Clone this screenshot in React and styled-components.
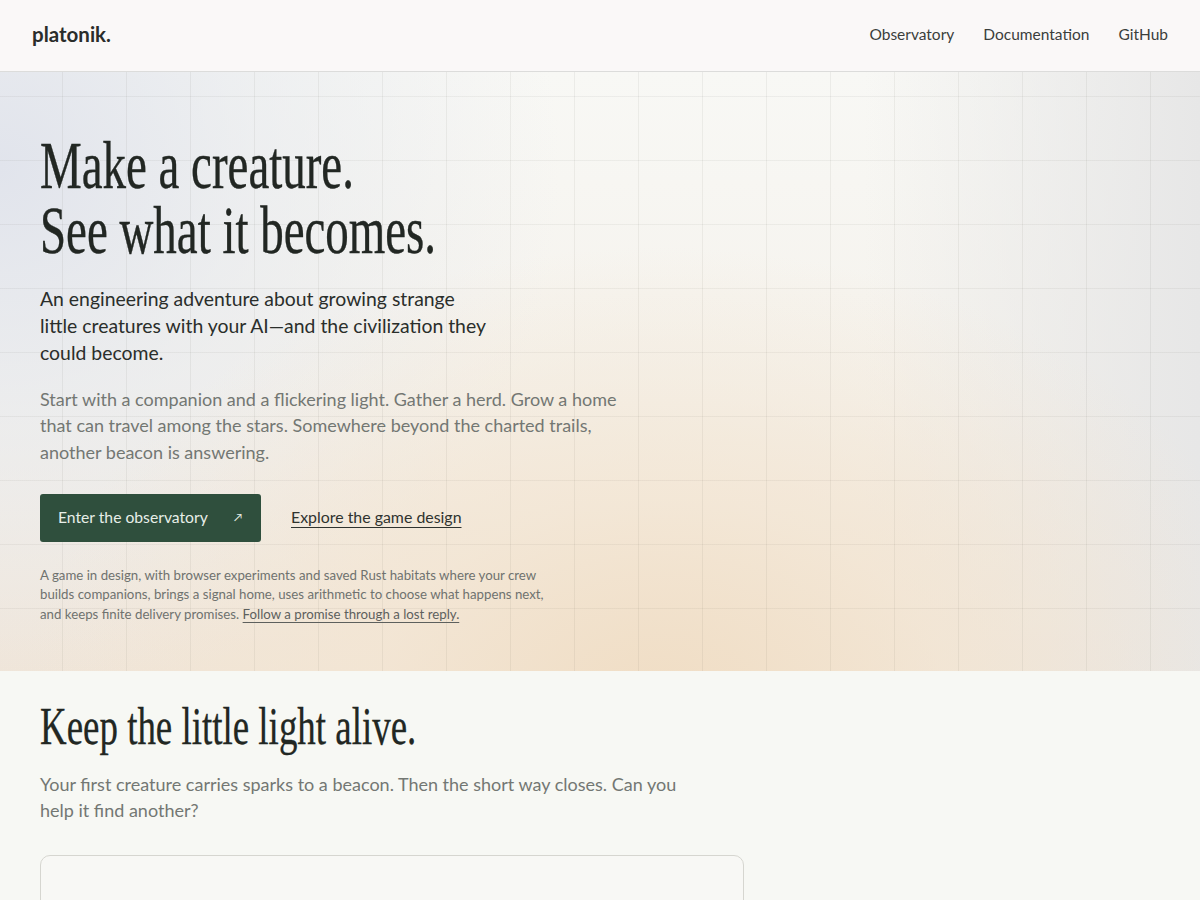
import React from "react";
import styled, { createGlobalStyle } from "styled-components";

const Global = createGlobalStyle`
  html, body { margin: 0; padding: 0; }
  body {
    background: #f7f7f3;
    font-family: "Lato", "Liberation Sans", sans-serif;
    color: #262a27;
    -webkit-font-smoothing: antialiased;
  }
  * { box-sizing: border-box; }
`;

const Header = styled.header`
  height: 72px;
  padding: 0 32px 3px;
  display: flex;
  align-items: center;
  justify-content: space-between;
  background: #faf8f8;
  border-bottom: 1px solid #dcdcdb;
  box-shadow: 0 1px 3px rgba(0, 0, 0, 0.04);
`;

const Logo = styled.a`
  font-size: 20.5px;
  font-weight: 700;
  color: #2a2d2b;
  text-decoration: none;
`;

const Nav = styled.nav`
  display: flex;
  gap: 29px;
`;

const NavLink = styled.a`
  font-size: 15.5px;
  color: #3b3e3c;
  text-decoration: none;
`;

const Hero = styled.section`
  padding: 61px 40px 47px;
  background-color: #f6f5f1;
  background-image:
    linear-gradient(to right, rgba(60, 60, 50, 0.065) 1px, transparent 1px),
    linear-gradient(to bottom, rgba(60, 60, 50, 0.06) 1px, transparent 1px),
    radial-gradient(ellipse 640px 460px at 55% 106%, rgba(240, 221, 196, 1) 0%, rgba(243, 229, 210, 0.75) 45%, rgba(246, 240, 230, 0) 100%),
    radial-gradient(ellipse 560px 540px at 0% 16%, rgba(225, 228, 236, 1) 0%, rgba(230, 233, 238, 0.6) 45%, rgba(240, 241, 240, 0) 100%),
    linear-gradient(to right, rgba(231, 230, 229, 0) 72%, rgba(231, 231, 231, 1) 100%),
    linear-gradient(to bottom, #f8f8f5 0%, #f5f2ec 55%, #f0e5d8 100%);
  background-size: 64px 64px, 64px 64px, auto, auto, auto, auto;
  background-position: 62px 24px, 62px 24px, 0 0, 0 0, 0 0, 0 0;
`;

const Display = styled.h1`
  margin: 0;
  font-family: "Liberation Serif", "Times New Roman", serif;
  font-weight: 400;
  font-size: 68px;
  line-height: 65px;
  color: #222723;
  transform: scaleX(0.69);
  transform-origin: left top;
  -webkit-text-stroke: 0.4px #222723;
  white-space: nowrap;
`;

const Lead = styled.p`
  margin: 22px 0 0;
  max-width: 456px;
  font-size: 19.4px;
  line-height: 27px;
  color: #2a2e2b;
`;

const Body = styled.p`
  margin: ${(p) => p.$mt || 20}px 0 0;
  max-width: ${(p) => p.$max || 590}px;
  font-size: 18px;
  line-height: 26.4px;
  color: #737773;
`;

const Actions = styled.div`
  margin-top: 29px;
  display: flex;
  align-items: center;
  gap: 30px;
`;

const PrimaryButton = styled.a`
  height: 48px;
  width: 221px;
  padding: 0 18px 3px;
  display: flex;
  align-items: center;
  justify-content: space-between;
  background: #2f4f3d;
  color: #e7eee8;
  border-radius: 3px;
  font-size: 15.7px;
  text-decoration: none;
`;

const Arrow = styled.span`
  font-size: 11px;
  margin-right: 1px;
`;

const TextLink = styled.a`
  font-size: 15.9px;
  margin-bottom: 3px;
  color: #2f332f;
  text-decoration: underline;
  text-underline-offset: 4px;
  text-decoration-thickness: 1px;
`;

const Fine = styled.p`
  margin: 24px 0 0;
  max-width: 520px;
  font-size: 13.25px;
  line-height: 19.2px;
  color: #6f726f;

  a {
    color: #5d605d;
    text-decoration: underline;
    text-underline-offset: 3px;
    text-decoration-thickness: 1px;
  }
`;

const Section = styled.section`
  padding: 27px 40px 0;
  background: #f7f8f4;
`;

const SectionTitle = styled.h2`
  margin: 0;
  font-family: "Liberation Serif", "Times New Roman", serif;
  font-weight: 400;
  font-size: 52px;
  line-height: 57px;
  color: #222723;
  transform: scaleX(0.71);
  transform-origin: left top;
  -webkit-text-stroke: 0.3px #222723;
  white-space: nowrap;
`;

const Card = styled.div`
  margin-top: 31px;
  width: 704px;
  height: 120px;
  border: 1px solid #d6d6d0;
  border-radius: 10px;
  background: #f8f8f5;
`;

export default function App() {
  return (
    <>
      <Global />
      <Header>
        <Logo href="#">platonik.</Logo>
        <Nav>
          <NavLink href="#">Observatory</NavLink>
          <NavLink href="#">Documentation</NavLink>
          <NavLink href="#">GitHub</NavLink>
        </Nav>
      </Header>
      <Hero>
        <Display>
          Make a creature.
          <br />
          See what it becomes.
        </Display>
        <Lead>
          An engineering adventure about growing strange little creatures with
          your AI—and the civilization they could become.
        </Lead>
        <Body>
          Start with a companion and a flickering light. Gather a herd. Grow a
          home that can travel among the stars. Somewhere beyond the charted
          trails, another beacon is answering.
        </Body>
        <Actions>
          <PrimaryButton href="#">
            Enter the observatory <Arrow>↗</Arrow>
          </PrimaryButton>
          <TextLink href="#">Explore the game design</TextLink>
        </Actions>
        <Fine>
          A game in design, with browser experiments and saved Rust habitats
          where your crew builds companions, brings a signal home, uses
          arithmetic to choose what happens next, and keeps finite delivery
          promises. <a href="#">Follow a promise through a lost reply.</a>
        </Fine>
      </Hero>
      <Section>
        <SectionTitle>Keep the little light alive.</SectionTitle>
        <Body $max={660} $mt={16}>
          Your first creature carries sparks to a beacon. Then the short way
          closes. Can you help it find another?
        </Body>
        <Card />
      </Section>
    </>
  );
}
